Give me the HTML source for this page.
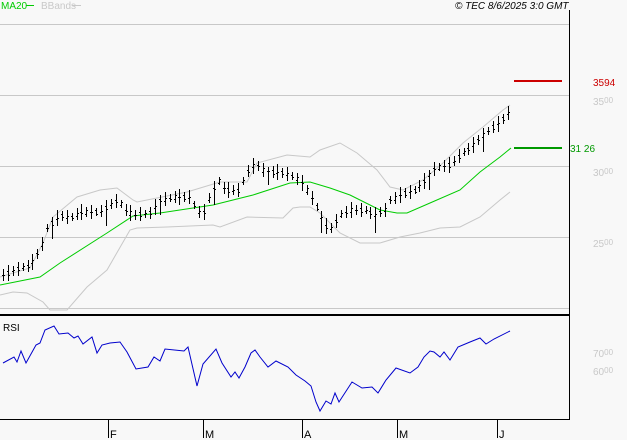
<!DOCTYPE html>
<html><head><meta charset="utf-8"><style>
html,body{margin:0;padding:0;background:#f8f8f8;width:627px;height:440px;overflow:hidden}
svg{display:block}
text{font-family:"Liberation Sans",sans-serif}
</style></head><body>
<svg id="s" width="627" height="440" xmlns="http://www.w3.org/2000/svg">
<rect width="627" height="440" fill="#f8f8f8"/>
<text x="1" y="9" font-size="10" fill="#00cc00">MA20</text>
<line x1="26" y1="5.5" x2="34" y2="5.5" stroke="#00cc00"/>
<text x="41" y="9" font-size="10" fill="#c8c8c8">BBands</text>
<line x1="72" y1="5.5" x2="81" y2="5.5" stroke="#c8c8c8"/>
<text x="455" y="9" font-size="10" font-style="italic" fill="#000">© TEC 8/6/2025 3:0 GMT</text>
<g stroke="#c8c8c8" stroke-width="1">
<line x1="0" y1="24.5" x2="569" y2="24.5"/>
<line x1="0" y1="95.5" x2="569" y2="95.5"/>
<line x1="0" y1="166.5" x2="569" y2="166.5"/>
<line x1="0" y1="237.5" x2="569" y2="237.5"/>
<line x1="0" y1="308.5" x2="569" y2="308.5"/>
</g>
<line x1="569.5" y1="10" x2="569.5" y2="420" stroke="#000"/>
<line x1="0" y1="315" x2="570" y2="315" stroke="#000" stroke-width="2"/>
<line x1="0" y1="419.5" x2="570" y2="419.5" stroke="#000"/>
<g fill="none" stroke="#c8c8c8">
<polyline points="0,277 13,273 30,268 43,243 53,217 77,197 100,190 117,188 133,200 137,202 187,192 220,182 247,182 257,163 287,155 310,157 320,150 340,143 357,153 377,170 390,187 403,190 423,180 443,163 463,143 483,127 503,110 510,105"/>
<polyline points="0,295 13,292 27,293 43,302 50,310 67,310 87,287 107,270 130,230 137,228 167,227 213,225 220,227 247,217 283,218 293,208 300,207 310,207 320,213 340,233 360,243 380,243 400,237 420,233 440,228 460,227 480,217 500,200 510,192"/>
</g>
<polyline fill="none" stroke="#00cc00" points="0,285 40,277 60,263 107,233 133,216 160,213 193,208 213,205 253,195 290,183 310,182 330,188 350,195 380,210 397,213 407,213 430,203 460,190 480,172 500,157 511,148"/>
<g id="bars" stroke="#000" fill="none"></g>
<line x1="514" y1="81" x2="562" y2="81" stroke="#cc0000" stroke-width="2"/>
<line x1="514" y1="148" x2="562" y2="148" stroke="#009900" stroke-width="2"/>
<text x="593" y="86" font-size="10" fill="#cc0000">3594</text>
<text x="570" y="152" font-size="10" fill="#009900">31 26</text>
<g font-size="10" fill="#c8c8c8">
<text x="593" y="105">35<tspan font-size="8" dy="-2">00</tspan></text>
<text x="593" y="176">30<tspan font-size="8" dy="-2">00</tspan></text>
<text x="593" y="247">25<tspan font-size="8" dy="-2">00</tspan></text>
<text x="593" y="357">70<tspan font-size="8" dy="-2">00</tspan></text>
<text x="593" y="375">60<tspan font-size="8" dy="-2">00</tspan></text>
</g>
<text x="3" y="331" font-size="10" fill="#000">RSI</text>
<polyline fill="none" stroke="#0000cc" points="3,363 14,357 17,362 21,351 26,363 36,345 40,343 45,330 54,326 59,334 68,333 74,338 78,336 83,344 92,337 97,353 102,345 110,343 120,342 127,352 136,369 148,367 154,357 160,361 165,349 184,351 188,347 197,386 203,364 216,349 222,363 231,377 235,372 239,378 245,367 251,353 255,350 260,357 268,367 276,361 288,367 296,375 305,381 311,386 316,402 320,411 326,401 331,404 335,393 339,402 352,382 362,388 372,387 378,393 386,380 396,368 410,373 418,367 424,357 430,351 434,352 440,357 444,352 450,360 458,347 470,342 480,338 486,344 494,339 510,331"/>
<g stroke="#000">
<line x1="108.5" y1="420" x2="108.5" y2="438"/>
<line x1="203.5" y1="420" x2="203.5" y2="438"/>
<line x1="302.5" y1="420" x2="302.5" y2="438"/>
<line x1="397.5" y1="420" x2="397.5" y2="438"/>
<line x1="497.5" y1="420" x2="497.5" y2="438"/>
</g>
<g font-size="11" fill="#000">
<text x="110" y="438">F</text>
<text x="205" y="438">M</text>
<text x="304" y="438">A</text>
<text x="399" y="438">M</text>
<text x="499" y="438">J</text>
</g>
</svg>
<script>
var k=[[3,275],[20,268],[30,265],[35,258],[42,245],[45,230],[55,220],[60,215],[70,218],[80,212],[100,212],[110,205],[118,200],[125,210],[135,215],[150,213],[160,200],[175,197],[190,197],[197,210],[203,215],[210,195],[218,180],[225,190],[240,190],[245,175],[255,163],[262,170],[270,172],[285,173],[300,180],[310,195],[318,210],[325,225],[330,230],[340,215],[350,210],[365,210],[375,215],[385,210],[390,200],[400,195],[415,190],[425,180],[435,168],[450,165],[460,155],[470,148],[485,133],[500,122],[510,110]];
function f(x){for(var i=1;i<k.length;i++){if(x<=k[i][0]){var a=k[i-1],b=k[i];return a[1]+(b[1]-a[1])*(x-a[0])/(b[0]-a[0]);}}return k[k.length-1][1];}
var g=document.getElementById('bars'),s='',n=0;
for(var x=3;x<=510;x+=4.9){n++;var xx=Math.round(x)+0.5,c=f(x),r=4+((n*7)%5),o=((n*13)%9)-4;
var hi=Math.round(c-r),lo=Math.round(c+r+((n%11==0)?10:0));
s+='<line x1="'+xx+'" y1="'+hi+'" x2="'+xx+'" y2="'+lo+'"/>';
s+='<line x1="'+(xx-1.5)+'" y1="'+(Math.round(c-o/2)+.5)+'" x2="'+xx+'" y2="'+(Math.round(c-o/2)+.5)+'"/>';
s+='<line x1="'+xx+'" y1="'+(Math.round(c+o/2)+.5)+'" x2="'+(xx+1.5)+'" y2="'+(Math.round(c+o/2)+.5)+'"/>';}
g.innerHTML=s;
</script>
</body></html>
